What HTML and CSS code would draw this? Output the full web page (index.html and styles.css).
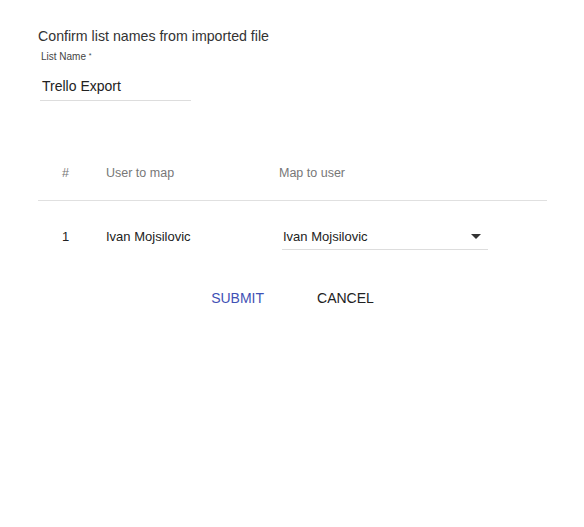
FILE: index.html
```html
<!DOCTYPE html>
<html>
<head>
  <title>Import Trello</title>
  <link rel="stylesheet" href="styles.css">
</head>
<body>
  <div class="page">
    <div class="title">Confirm list names from imported file</div>
    <div class="field">
      <label class="field-label" for="listName">List Name <span class="req">*</span></label>
      <div class="field-input" id="listName">Trello Export</div>
    </div>

    <div class="map-table">
      <div class="map-row map-head">
        <div class="cell">#</div>
        <div class="cell">User to map</div>
        <div class="cell">Map to user</div>
      </div>
      <div class="map-row">
        <div class="cell">1</div>
        <div class="cell">Ivan Mojsilovic</div>
        <div class="cell">
          <div class="select">
            <span>Ivan Mojsilovic</span>
            <svg class="arrow" width="10" height="5" viewBox="0 0 10 5"><path d="M0 0h10L5 5z" fill="#333"/></svg>
          </div>
        </div>
      </div>
    </div>

    <div class="actions">
      <button class="btn btn-primary">SUBMIT</button>
      <button class="btn">CANCEL</button>
    </div>
  </div>
</body>
</html>
```

FILE: styles.css
```css
body {
  margin: 0;
  font-family: "Liberation Sans", Arial, sans-serif;
  background-color: #fff;
  color: #222;
}
.page {
  padding: 28px 37px 0 38px;
}
.title {
  font-size: 14.2px;
  line-height: 16px;
  color: #333;
}
.field {
  margin-left: 2px;
  width: 151px;
}
.field-label {
  display: block;
  height: 12px;
  margin-top: 7px;
  padding-left: 1px;
  font-size: 10px;
  line-height: 12px;
  color: #444;
}
.req {
  font-size: 7px;
  line-height: 0;
  vertical-align: 2px;
}
.field-input {
  margin-top: 13px;
  padding: 0 0 4px 2px;
  font-size: 14px;
  line-height: 20px;
  color: #222;
  border-bottom: 1px solid #ddd;
}
.map-table {
  margin-top: 64px;
}
.map-row {
  display: grid;
  grid-template-columns: 44px 173px 209px;
  padding-left: 24px;
  padding-top: 28px;
  font-size: 13px;
  line-height: 16px;
  color: #222;
}
.map-head {
  padding-top: 0;
  padding-bottom: 19px;
  border-bottom: 1px solid #e0e0e0;
  font-size: 12.5px;
  color: #777;
}
.select {
  display: flex;
  align-items: center;
  justify-content: space-between;
  margin-left: 3px;
  padding: 0 7px 4px 1px;
  border-bottom: 1px solid #ddd;
}
.arrow {
  display: block;
  margin-top: -2px;
}
.actions {
  display: flex;
  justify-content: center;
  gap: 53px;
  margin-top: 40px;
}
.btn {
  padding: 0;
  border: none;
  background: none;
  font-family: "Liberation Sans", Arial, sans-serif;
  font-size: 14px;
  line-height: 16px;
  color: #222;
  cursor: pointer;
}
.btn-primary {
  color: #3f51b5;
}
```
